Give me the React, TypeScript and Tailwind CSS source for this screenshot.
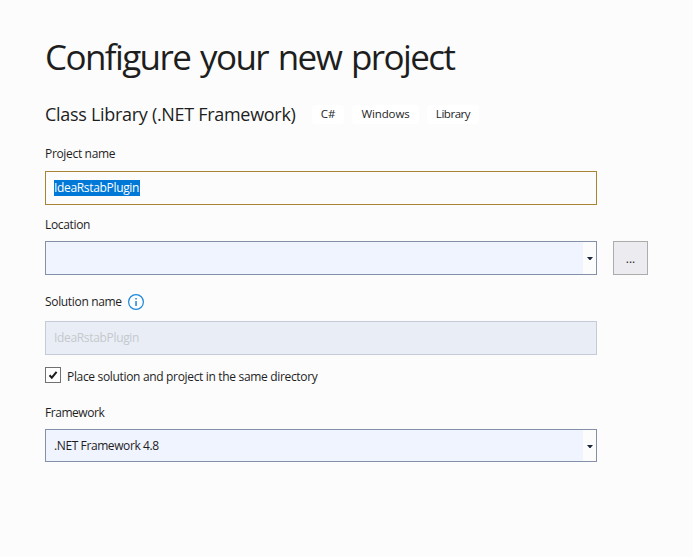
import React from 'react';

function Tag({ className, children }: { className: string; children: React.ReactNode }) {
  return (
    <span className={`flex h-[19px] items-center justify-center rounded-[4px] bg-white text-[11.5px] ${className}`}>
      {children}
    </span>
  );
}

function ComboBox({ className, children }: { className: string; children?: React.ReactNode }) {
  return (
    <div className={`flex w-[552px] border border-[#8490a7] bg-[#f0f4fe] ${className}`}>
      <div className="flex flex-1 items-center pl-2">{children}</div>
      <div className="flex w-[13px] items-center justify-center bg-[#fcfcfc]">
        <svg width="6" height="3" viewBox="0 0 6 3" className="mt-px">
          <path d="M0 0h6L3.5 3h-1z" fill="#1b293e" />
        </svg>
      </div>
    </div>
  );
}

export default function App() {
  return (
    <main className="flex h-[557px] w-[693px] flex-col overflow-hidden bg-[#fcfcfc] pl-[45px] font-['Open_Sans','Noto_Sans',sans-serif] text-[12px] leading-4 tracking-[-0.33px] whitespace-nowrap text-[#1e1e1e]">
      <h1 className="mt-[33px] h-12 text-[35px] leading-[48px] tracking-[-1.6px] [word-spacing:2.3px]">
        Configure your new project
      </h1>

      <div className="mt-[22px] flex h-[22px] items-center">
        <h2 className="w-[267px] text-[18px] leading-[22px] tracking-[-0.3px]">Class Library (.NET Framework)</h2>
        <div className="flex gap-2">
          <Tag className="w-8 tracking-[-0.1px]">C#</Tag>
          <Tag className="w-[67px] tracking-[-0.1px]">Windows</Tag>
          <Tag className="w-[52px] tracking-[-0.45px]">Library</Tag>
        </div>
      </div>

      <div className="mt-[21px] h-4">Project name</div>
      <div className="mt-[9px] flex h-[34px] w-[552px] items-center border border-[#a98432] pl-2">
        <span className="flex h-4 w-[86px] items-center bg-[#0078d7] text-white">IdeaRstabPlugin</span>
      </div>

      <div className="mt-3 h-4">Location</div>
      <div className="mt-2 flex gap-4">
        <ComboBox className="h-[34px]" />
        <button className="flex h-[34px] w-[35px] items-center justify-center border border-[#acacac] bg-[#ececf0] pt-0.5 tracking-normal">...</button>
      </div>

      <div className="mt-[18px] flex h-[18px] items-center">
        <span className="w-[82px]">Solution name</span>
        <svg width="18" height="18" viewBox="0 0 18 18">
          <circle cx="9" cy="9" r="7.4" fill="none" stroke="#1a86da" strokeWidth="1.2" />
          <path d="M8.3 5h1.5v1.5H8.3zM8.3 8h1.5v5H8.3z" fill="#1a86da" />
        </svg>
      </div>
      <div className="mt-[10px] flex h-[34px] w-[552px] items-center border border-[#c6cbd8] bg-[#e9eef6] pl-2 text-[#c6c8cc]">
        <span>IdeaRstabPlugin</span>
      </div>

      <div className="mt-3 flex h-[18px]">
        <span className="h-4 w-4 border border-[#717171] bg-white">
          <svg width="14" height="14" viewBox="0 0 14 14">
            <path d="M3.5 7.2L5.8 9.7L10.6 3.8" fill="none" stroke="#1e1e1e" strokeWidth="2" />
          </svg>
        </span>
        <span className="mt-0.5 ml-1.5">Place solution and project in the same directory</span>
      </div>

      <div className="mt-5 h-4 tracking-[-0.45px]">Framework</div>
      <ComboBox className="mt-2 h-[33px]">
        <span className="tracking-[-0.4px]">.NET Framework 4.8</span>
      </ComboBox>
    </main>
  );
}
